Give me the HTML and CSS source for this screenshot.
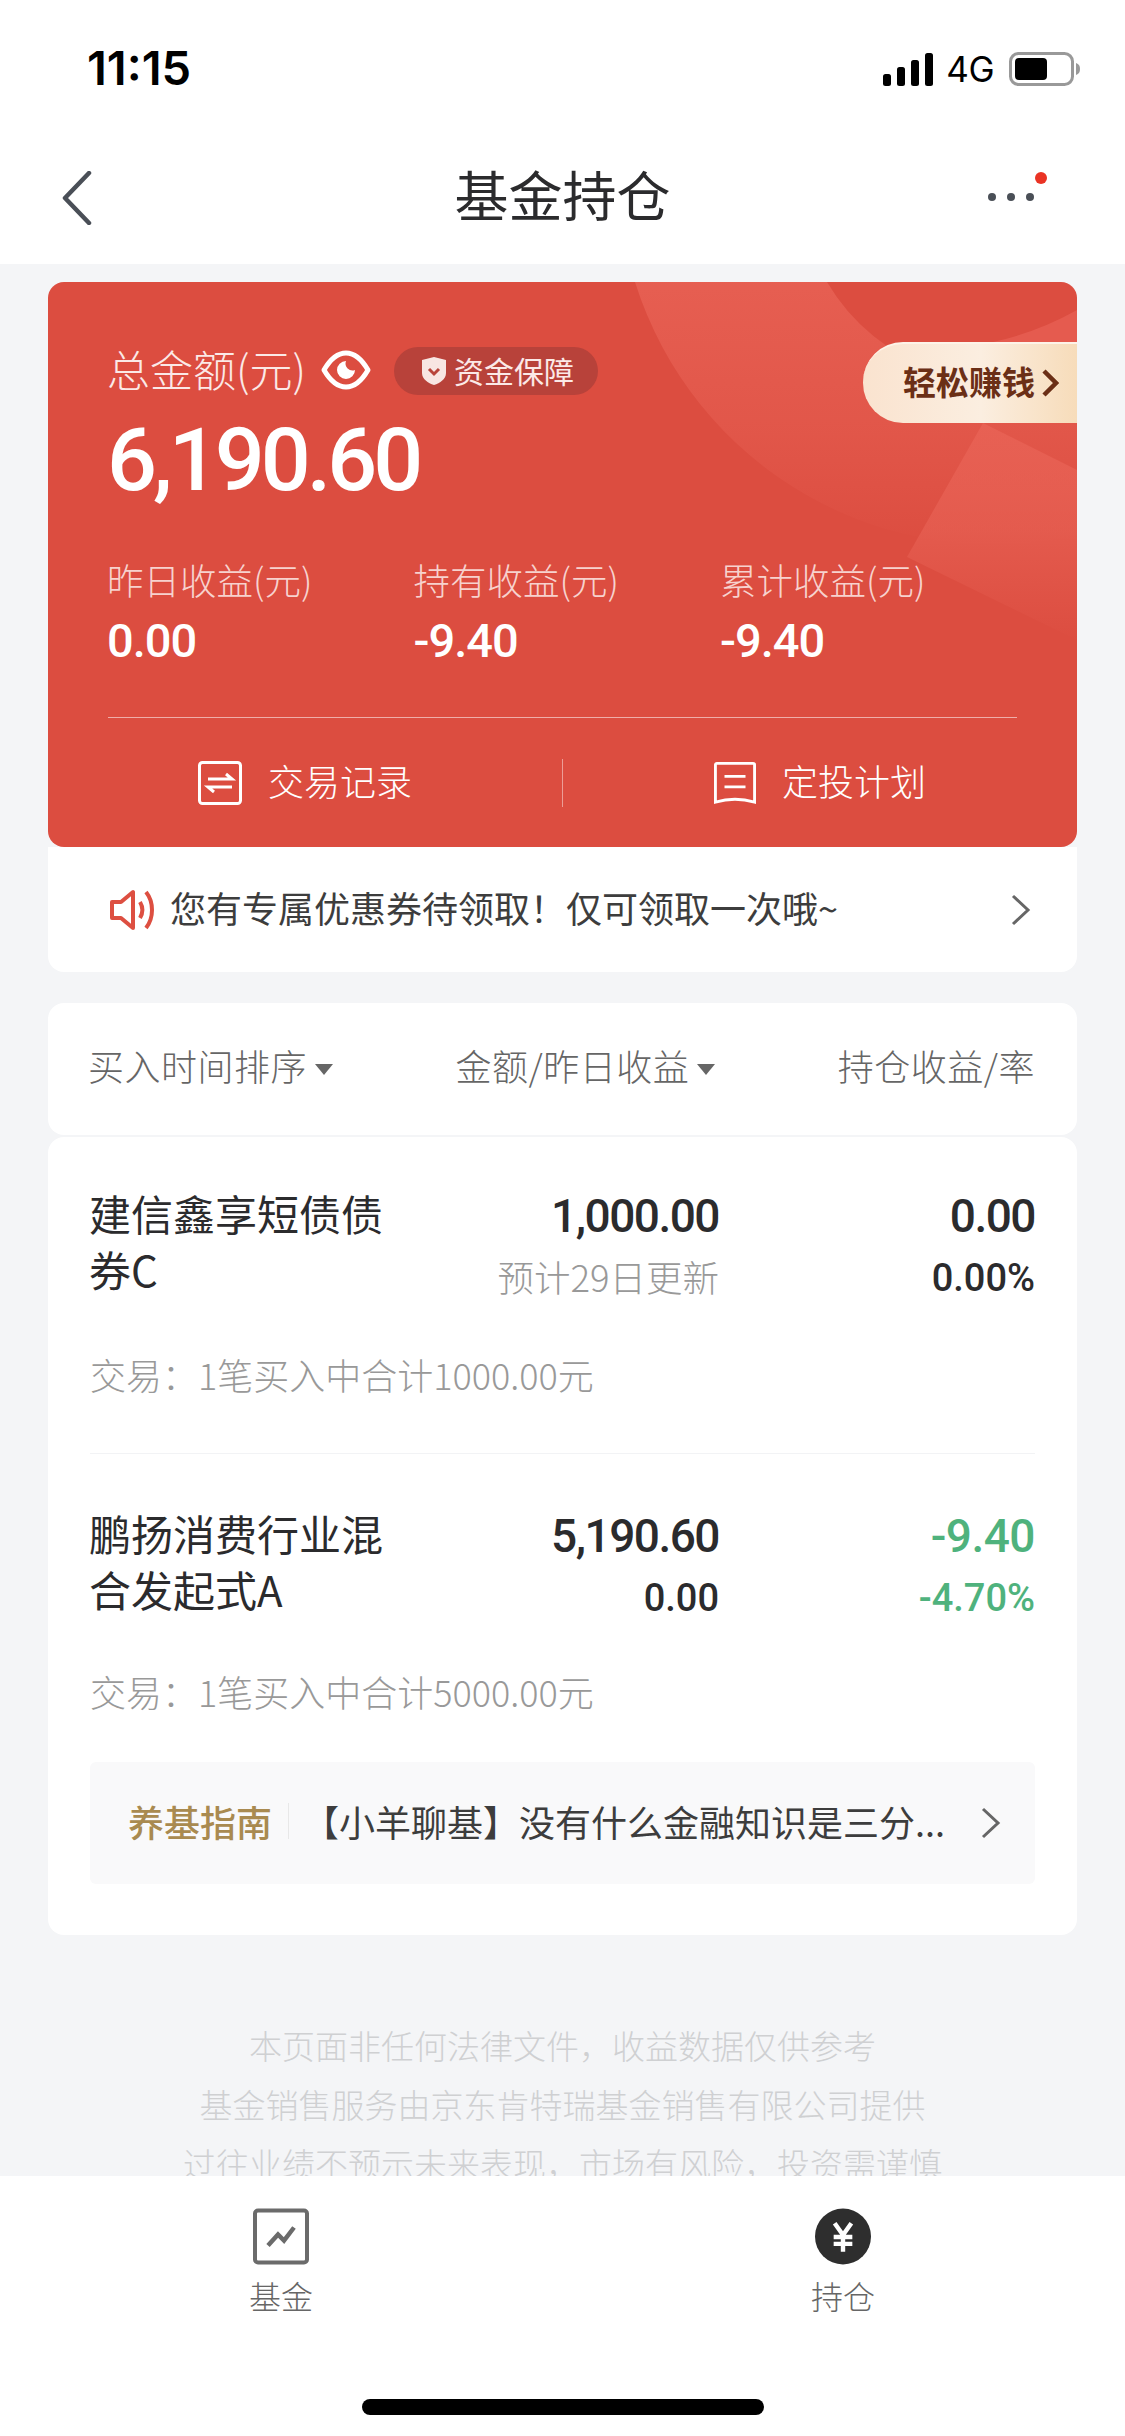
FILE: index.html
```html
<!DOCTYPE html>
<html lang="zh-CN">
<head>
<meta charset="utf-8">
<title>基金持仓</title>
<link rel="stylesheet" href="styles.css">
</head>
<body>
<div class="screen">
  <header class="top">
    <div class="status">
      <span class="time">11:15</span>
      <div class="status-right">
        <svg class="signal" viewBox="0 0 50 33"><rect x="0" y="21" width="8" height="12" rx="2.500"/><rect x="14" y="14" width="8" height="19" rx="2.500"/><rect x="28" y="7" width="8" height="26" rx="2.500"/><rect x="42" y="0" width="8" height="33" rx="2.500"/></svg>
        <span class="net">4G</span>
        <svg class="battery" viewBox="0 0 72 34"><rect x="1.500" y="1.500" width="62" height="31" rx="8" fill="none" stroke="#999" stroke-width="3"/><rect x="6" y="6" width="32" height="22" rx="4" fill="#000"/><path d="M67 11c3 1 4 3 4 6s-1 5-4 6z" fill="#999"/></svg>
      </div>
    </div>
    <nav class="nav">
      <svg class="back" viewBox="0 0 30 54"><path d="M27 2 3 27l24 25" fill="none" stroke="#4a4f57" stroke-width="4.500" stroke-linecap="round" stroke-linejoin="round"/></svg>
      <h1 class="title">基金持仓</h1>
      <svg class="more" viewBox="0 0 64 40"><circle cx="6" cy="26" r="4" fill="#4a4f57"/><circle cx="25" cy="26" r="4" fill="#4a4f57"/><circle cx="44" cy="26" r="4" fill="#4a4f57"/><circle cx="55" cy="7" r="6" fill="#ea3324"/></svg>
    </nav>
  </header>

  <main class="content">
    <section class="hero">
      <svg class="hero-bg" viewBox="0 0 1029 565" preserveAspectRatio="none">
        <defs>
          <linearGradient id="ringFade" gradientUnits="userSpaceOnUse" x1="0" y1="0" x2="0" y2="265"><stop offset="0" stop-color="#ea6558" stop-opacity=".72"/><stop offset=".55" stop-color="#ea6558" stop-opacity=".4"/><stop offset="1" stop-color="#ea6558" stop-opacity="0"/></linearGradient>
          <linearGradient id="kiteFade" gradientUnits="userSpaceOnUse" x1="0" y1="140" x2="0" y2="360"><stop offset="0" stop-color="#ea6558" stop-opacity=".7"/><stop offset=".5" stop-color="#ea6558" stop-opacity=".55"/><stop offset="1" stop-color="#ea6558" stop-opacity="0"/></linearGradient>
        </defs>
        <path fill-rule="evenodd" d="M587 0A375 375 0 0 0 1029 253V0ZM779 0A200 200 0 0 0 1029 83V0Z" fill="url(#ringFade)"/>
        <path d="M1029 28Q990 50 945 60H1029Z" fill="#e55b4f"/>
        <path d="M935 141 859 275 1029 358V188Z" fill="url(#kiteFade)"/>
      </svg>
      <div class="hero-main">
        <div class="total-row">
          <span class="total-label">总金额(元)</span>
          <svg class="eye" viewBox="0 0 50 40"><path d="M3 20C10 8 17 3 25 3s15 5 22 17c-7 12-14 17-22 17S10 32 3 20Z" fill="none" stroke="#fff" stroke-width="5" stroke-linejoin="round"/><path d="M25 11a9 9 0 1 0 9 9 7 7 0 0 1-9-9Z" fill="#fff"/></svg>
          <span class="safe">
            <svg class="shield" viewBox="0 0 26 30"><path d="M13 1 25 4v13c0 6-6 10-12 12C7 27 1 23 1 17V4Z" fill="#f8e6e3"/><path d="m8 13 5 5 5-5" fill="none" stroke="#b8453c" stroke-width="3"/></svg>
            <span>资金保障</span>
          </span>
        </div>
        <div class="total-num">6,190.60</div>
        <div class="stats">
          <div class="stat"><span class="stat-label">昨日收益(元)</span><span class="stat-num">0.00</span></div>
          <div class="stat"><span class="stat-label">持有收益(元)</span><span class="stat-num">-9.40</span></div>
          <div class="stat"><span class="stat-label">累计收益(元)</span><span class="stat-num">-9.40</span></div>
        </div>
      </div>
      <div class="actions">
        <div class="action">
          <svg class="action-icon" viewBox="0 0 44 44"><rect x="1.500" y="1.500" width="41" height="41" rx="3" fill="none" stroke="#fff" stroke-width="3"/><path d="M10 18h24l-6-5M34 26H10l6 5" fill="none" stroke="#fff" stroke-width="3"/></svg>
          <span>交易记录</span>
        </div>
        <div class="action">
          <svg class="action-icon icon-plan" viewBox="0 0 44 44"><path d="M3 1.500h38a1.500 1.500 0 0 1 1.500 1.500v39c-14-4-27-4-41 0V3A1.500 1.500 0 0 1 3 1.500Z" fill="none" stroke="#fff" stroke-width="3"/><path d="M11 15h22M11 26h22" fill="none" stroke="#fff" stroke-width="3"/></svg>
          <span>定投计划</span>
        </div>
      </div>
      <div class="promo"><span>轻松赚钱</span>
        <svg class="promo-arrow" viewBox="0 0 18 30"><path d="M3 3l12 12L3 27" fill="none" stroke="#6b2f16" stroke-width="4.500"/></svg>
      </div>
    </section>

    <section class="notice">
      <svg class="horn" viewBox="0 0 44 42"><path d="M2 13h9L23 3v36L11 29H2Z" fill="none" stroke="#dd4f41" stroke-width="4" stroke-linejoin="round"/><path d="M30 13c3 5 3 11 0 16" fill="none" stroke="#dd4f41" stroke-width="4"/><path d="M36 3c8 10 8 26 0 36" fill="none" stroke="#dd4f41" stroke-width="4"/></svg>
      <span class="notice-text">您有专属优惠券待领取！仅可领取一次哦~</span>
      <svg class="chev" viewBox="0 0 20 32"><path d="M2 2l15 14L2 30" fill="none" stroke="#666" stroke-width="3"/></svg>
    </section>

    <section class="filters">
      <span class="filter">买入时间排序<i class="caret"></i></span>
      <span class="filter">金额/昨日收益<i class="caret"></i></span>
      <span class="filter">持仓收益/率</span>
    </section>

    <section class="list">
      <article class="fund">
        <div class="fund-row">
          <div class="fund-name">建信鑫享短债债券C</div>
          <div class="fund-amount"><span class="amt">1,000.00</span><span class="amt-note">预计29日更新</span></div>
          <div class="fund-gain"><span class="gain">0.00</span><span class="rate">0.00%</span></div>
        </div>
        <div class="trade">交易：1笔买入中合计1000.00元</div>
      </article>
      <article class="fund">
        <div class="fund-row">
          <div class="fund-name">鹏扬消费行业混合发起式A</div>
          <div class="fund-amount"><span class="amt">5,190.60</span><span class="amt-zero">0.00</span></div>
          <div class="fund-gain is-down"><span class="gain">-9.40</span><span class="rate">-4.70%</span></div>
        </div>
        <div class="trade">交易：1笔买入中合计5000.00元</div>
      </article>
      <div class="guide">
        <span class="guide-tag">养基指南</span>
        <span class="guide-text">【小羊聊基】没有什么金融知识是三分...</span>
        <svg class="chev" viewBox="0 0 20 32"><path d="M2 2l15 14L2 30" fill="none" stroke="#666" stroke-width="3"/></svg>
      </div>
    </section>

    <footer class="legal">
      <p>本页面非任何法律文件，收益数据仅供参考</p>
      <p>基金销售服务由京东肯特瑞基金销售有限公司提供</p>
      <p>过往业绩不预示未来表现，市场有风险，投资需谨慎</p>
    </footer>
  </main>

  <div class="tabbar">
    <div class="tabs">
      <div class="tab">
        <svg class="tab-icon" viewBox="0 0 56 56"><rect x="2" y="2" width="52" height="52" rx="3" fill="none" stroke="#6b6b6b" stroke-width="4"/><path d="M15 37l10-11 6 6 10-13" fill="none" stroke="#6b6b6b" stroke-width="4.500"/></svg>
        <span>基金</span>
      </div>
      <div class="tab">
        <svg class="tab-icon" viewBox="0 0 57 57"><circle cx="28.500" cy="28.500" r="28.500" fill="#2e2e2e"/><path d="M20 15l8.500 12L37 15M19 29h19M19 36h19M28.500 27v17" fill="none" stroke="#fff" stroke-width="4.500"/></svg>
        <span>持仓</span>
      </div>
    </div>
    <div class="home"></div>
  </div>
</div>
</body>
</html>
```
FILE: styles.css
```css
* { box-sizing: border-box; margin: 0; padding: 0; }
html, body { width: 1125px; height: 2436px; overflow: hidden; background: #f4f5f7; }
body { font-family: "Noto Sans CJK SC", "Noto Sans", sans-serif; color: #333; }
.screen { position: relative; width: 1125px; height: 2436px; overflow: hidden; }

.top { background: #fff; height: 264px; }
.status { height: 132px; padding: 45px 44px 0 87px; display: flex; justify-content: space-between; align-items: flex-start; }
.time { font-family: Inter, "Liberation Sans", sans-serif; font-weight: 600; font-size: 47px; line-height: 46px; color: #000; letter-spacing: 0; }
.status-right { display: flex; align-items: center; gap: 13px; padding-top: 7px; }
.signal { width: 50px; height: 33px; fill: #000; }
.net { font-family: Inter, "Liberation Sans", sans-serif; font-size: 35px; line-height: 34px; color: #000; letter-spacing: -.5px; }
.battery { width: 72px; height: 34px; margin-left: 2px; }
.nav { height: 132px; display: grid; grid-template-columns: 1fr auto 1fr; align-items: center; padding: 0 62px; }
.back { width: 30px; height: 54px; margin-top: -1px; }
.title { font-size: 54px; font-weight: 400; color: #2b2b2d; line-height: 64px; margin-top: -8px; }
.more { width: 64px; height: 40px; justify-self: end; margin-right: 13px; margin-top: -14px; }

.content { padding: 18px 48px 0; }
.hero { position: relative; height: 565px; background: #dc4d40; border-radius: 16px; overflow: hidden; }
.hero-bg { position: absolute; left: 0; top: 0; width: 100%; height: 100%; }
.hero-main { position: relative; padding: 56px 60px 0; height: 436px; }
.hero-main::after { content: ""; display: block; height: 1px; background: rgba(255,255,255,.55); width: 909px; position: absolute; left: 60px; bottom: 0; }
.total-row { display: flex; align-items: center; height: 60px; color: #fff; }
.total-label { font-size: 43px; font-weight: 300; line-height: 60px; color: #fbe9e7; margin-left: -1px; }
.eye { width: 50px; height: 40px; margin-left: 15px; margin-top: 4px; }
.safe { display: inline-flex; align-items: center; height: 48px; margin-left: 23px; margin-top: 6px; padding: 0 24px 0 27px; border-radius: 24px; background: #b8423a; font-size: 30px; color: #fbe9e7; gap: 7px; }
.safe span { padding-bottom: 3px; }
.shield { width: 26px; height: 30px; }
.total-num { font-family: Roboto, Lato, sans-serif; font-weight: 500; font-size: 88px; line-height: 100px; color: #fff; letter-spacing: -4px; margin-top: 12px; margin-left: -1px; }
.stats { display: flex; margin-top: 45px; }
.stat { flex: none; width: 306.500px; display: flex; flex-direction: column; }
.stat-label { font-size: 36.500px; font-weight: 300; line-height: 50px; color: #f7d2ce; margin-left: -1px; white-space: nowrap; }
.stat-num { font-family: Roboto, Lato, sans-serif; font-weight: 500; font-size: 47px; line-height: 54px; color: #fff; letter-spacing: -1px; margin-top: 9px; margin-left: -1px; }
.actions { position: relative; height: 129px; display: flex; align-items: center; }
.action { flex: 1; display: flex; align-items: center; justify-content: center; gap: 26px; font-size: 36px; font-weight: 300; color: #fff; }
.action span { padding-bottom: 5px; }
.action + .action { border-left: 1px solid rgba(255,255,255,.45); height: 48px; }
.action-icon { width: 44px; height: 44px; }
.icon-plan { width: 42px; }
.promo { position: absolute; right: 0; top: 60px; width: 214px; height: 81px; padding: 0 0 6px 40px; display: flex; align-items: center; gap: 6px; border-radius: 40px 0 0 40px; background: linear-gradient(90deg, #fae3cf, #fbeee0 55%, #f7dcba); border-top: 2px solid #fdf3e8; font-size: 33px; font-weight: 700; color: #6b2f16; white-space: nowrap; }
.promo-arrow { width: 18px; height: 30px; margin-top: 4px; }

.notice { height: 125px; background: #fff; display: flex; align-items: center; border-radius: 0 0 16px 16px; padding: 0 46px 0 62px; }
.horn { width: 44px; height: 42px; }
.notice-text { flex: 1; margin-left: 16px; padding-bottom: 5px; font-size: 36px; font-weight: 400; color: #3d3d3d; white-space: nowrap; }
.chev { width: 20px; height: 32px; }

.filters { margin-top: 31px; height: 132px; background: #fff; border-radius: 16px; display: flex; justify-content: space-between; align-items: center; padding: 0 42px 8px 40px; }
.filter { font-size: 36px; font-weight: 300; color: #666; display: inline-flex; align-items: center; letter-spacing: .5px; }
.caret { display: inline-block; width: 0; height: 0; margin-left: 8px; margin-top: 8px; border: 9px solid transparent; border-top: 11px solid #666; border-bottom: 0; }

.list { margin-top: 2px; background: #fff; border-radius: 16px; height: 798px; padding: 48px 42px 0; }
.fund { height: 269px; border-bottom: 1px solid #f2f3f5; }
.fund + .fund { padding-top: 51px; height: 308px; border-bottom: 0; }
.fund + .fund .fund-row { height: 161px; }
.fund-row { display: flex; height: 164px; }
.fund-name { width: 300px; margin-left: -1px; font-size: 42px; font-weight: 400; line-height: 56px; color: #2b2b2d; }
.fund-amount { width: 330px; display: flex; flex-direction: column; align-items: flex-end; }
.fund-gain { flex: 1; display: flex; flex-direction: column; align-items: flex-end; color: #2b2b2d; }
.amt, .gain { font-family: Roboto, Lato, sans-serif; font-weight: 500; font-size: 46px; line-height: 62px; letter-spacing: -1.500px; color: #2b2b2d; }
.is-down .gain { letter-spacing: -.5px; }
.rate, .amt-zero { font-family: Roboto, Lato, sans-serif; font-weight: 500; font-size: 38px; line-height: 62px; color: #2b2b2d; }
.amt-note { font-size: 36.500px; font-weight: 300; line-height: 60px; color: #999; }
.is-down .gain, .is-down .rate { color: #4fb27d; }
.trade { font-size: 36px; font-weight: 300; line-height: 50px; color: #999; }

.guide { height: 122px; background: #f9f9fa; border-radius: 6px; display: flex; align-items: center; padding: 0 34px 0 38px; }
.guide-tag { font-size: 36px; font-weight: 500; color: #a98a50; padding-right: 16px; border-right: 1px solid #e8e8e8; line-height: 36px; white-space: nowrap; margin-bottom: 4px; }
.guide-text { flex: 1; margin-left: 14px; padding-bottom: 4px; font-size: 36px; font-weight: 400; color: #3d3d3d; white-space: nowrap; }

.legal { margin-top: 81px; text-align: center; font-size: 33px; font-weight: 300; line-height: 59px; color: #cfd0d2; }

.tabbar { position: absolute; left: 0; right: 0; bottom: 0; height: 260px; background: #fff; }
.tabs { display: flex; padding: 32px 0 0; }
.tab { flex: 0 0 auto; width: 562px; display: flex; flex-direction: column; align-items: center; font-size: 32px; font-weight: 300; color: #666; line-height: 44px; gap: 8px; }
.tab-icon { width: 56px; height: 57px; }
.home { position: absolute; left: 362px; bottom: 21px; width: 402px; height: 16px; border-radius: 8px; background: #000; }
```
